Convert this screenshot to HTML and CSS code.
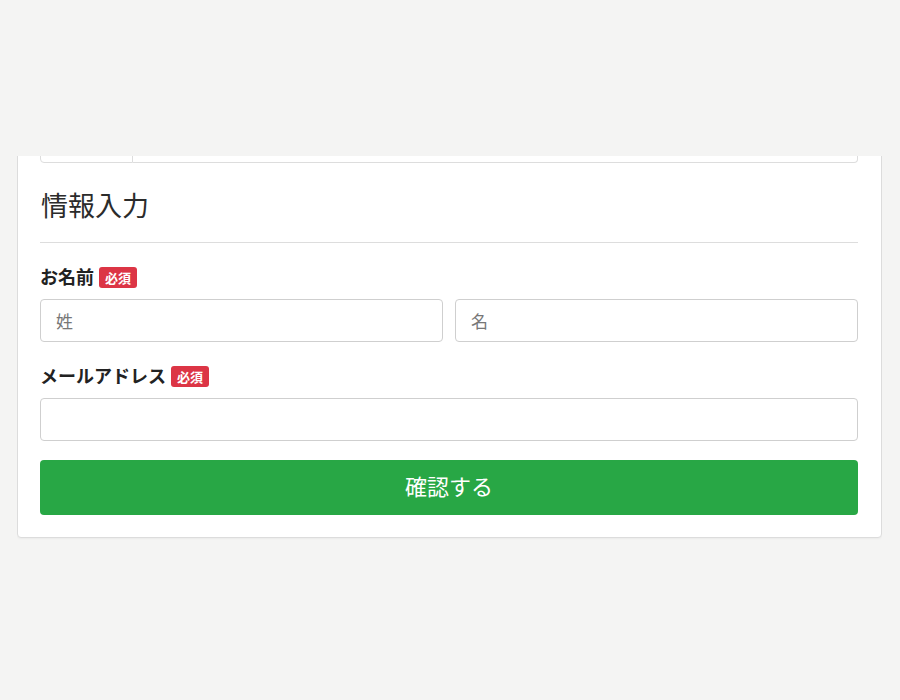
FILE: index.html
```html
<!DOCTYPE html>
<html lang="ja">
<head>
    <meta charset="UTF-8">
    <meta name="viewport" content="width=device-width, initial-scale=1.0">
    <title>情報入力</title>
    <link rel="stylesheet" href="styles.css">
</head>
<body>
    <div class="frame">
        <div class="card">
            <div class="input-group">
                <span class="input-prefix"></span>
                <input type="text" class="input-main">
            </div>

            <h2 class="section-title">情報入力</h2>
            <hr class="divider">

            <form class="info-form">
                <div class="form-row">
                    <label class="form-label">お名前 <span class="badge">必須</span></label>
                    <div class="name-fields">
                        <input type="text" class="form-input" placeholder="姓">
                        <input type="text" class="form-input" placeholder="名">
                    </div>
                </div>

                <div class="form-row last">
                    <label class="form-label">メールアドレス <span class="badge">必須</span></label>
                    <input type="email" class="form-input">
                </div>

                <button type="submit" class="submit-btn">確認する</button>
            </form>
        </div>
    </div>
</body>
</html>
```

FILE: styles.css
```css
body, html {
    margin: 0;
    height: 100%;
    background-color: #f4f4f3;
    font-family: "Noto Sans CJK JP", "Noto Sans", sans-serif;
    color: #333;
}

.frame {
    margin: 156px 18px 0 17px;
    overflow: hidden;
    padding-bottom: 4px;
}

.card {
    margin-top: -61px;
    background-color: white;
    border: 1px solid #dcdcdc;
    border-radius: 4px;
    padding: 24px 23px 22px 22px;
    box-shadow: 0 1px 2px rgba(0, 0, 0, 0.04);
}

.input-group {
    display: flex;
    height: 43px;
}

.input-prefix {
    width: 93px;
    box-sizing: border-box;
    border: 1px solid #ddd;
    border-radius: 4px 0 0 4px;
    background-color: #fff;
}

.input-main {
    flex: 1;
    box-sizing: border-box;
    border: 1px solid #ddd;
    border-left: none;
    border-radius: 0 4px 4px 0;
    margin: 0;
}

.section-title {
    margin: 26px 0 0 1px;
    font-size: 27px;
    font-weight: normal;
    line-height: 32px;
    color: #2b2b2b;
}

.divider {
    border: none;
    border-top: 1px solid #ddd;
    margin: 21px 0 0;
}

.info-form {
    margin-top: 20px;
}

.form-row {
    margin-bottom: 20px;
}

.form-row.last {
    margin-bottom: 19px;
}

.form-label {
    display: flex;
    align-items: center;
    gap: 5px;
    height: 26px;
    margin-bottom: 10px;
    font-size: 18px;
    font-weight: bold;
    color: #222;
}

.badge {
    display: inline-block;
    background-color: #dc3545;
    color: white;
    font-size: 13px;
    font-weight: bold;
    line-height: 21px;
    padding: 0 6px;
    border-radius: 3px;
    margin-top: 2px;
}

.name-fields {
    display: flex;
    gap: 12px;
}

.form-input {
    width: 100%;
    height: 43px;
    box-sizing: border-box;
    border: 1px solid #cfcfcf;
    border-radius: 4px;
    padding: 0 15px;
    font-family: "Noto Sans CJK JP", "Noto Sans", sans-serif;
    font-size: 17px;
    color: #333;
}

.form-input::placeholder {
    color: #777;
}

.submit-btn {
    display: block;
    width: 100%;
    height: 55px;
    margin: 0;
    padding: 0 0 6px;
    border: none;
    border-radius: 4px;
    background-color: #28a745;
    color: white;
    font-family: "Noto Sans CJK JP", "Noto Sans", sans-serif;
    font-size: 22px;
    cursor: pointer;
}
```
